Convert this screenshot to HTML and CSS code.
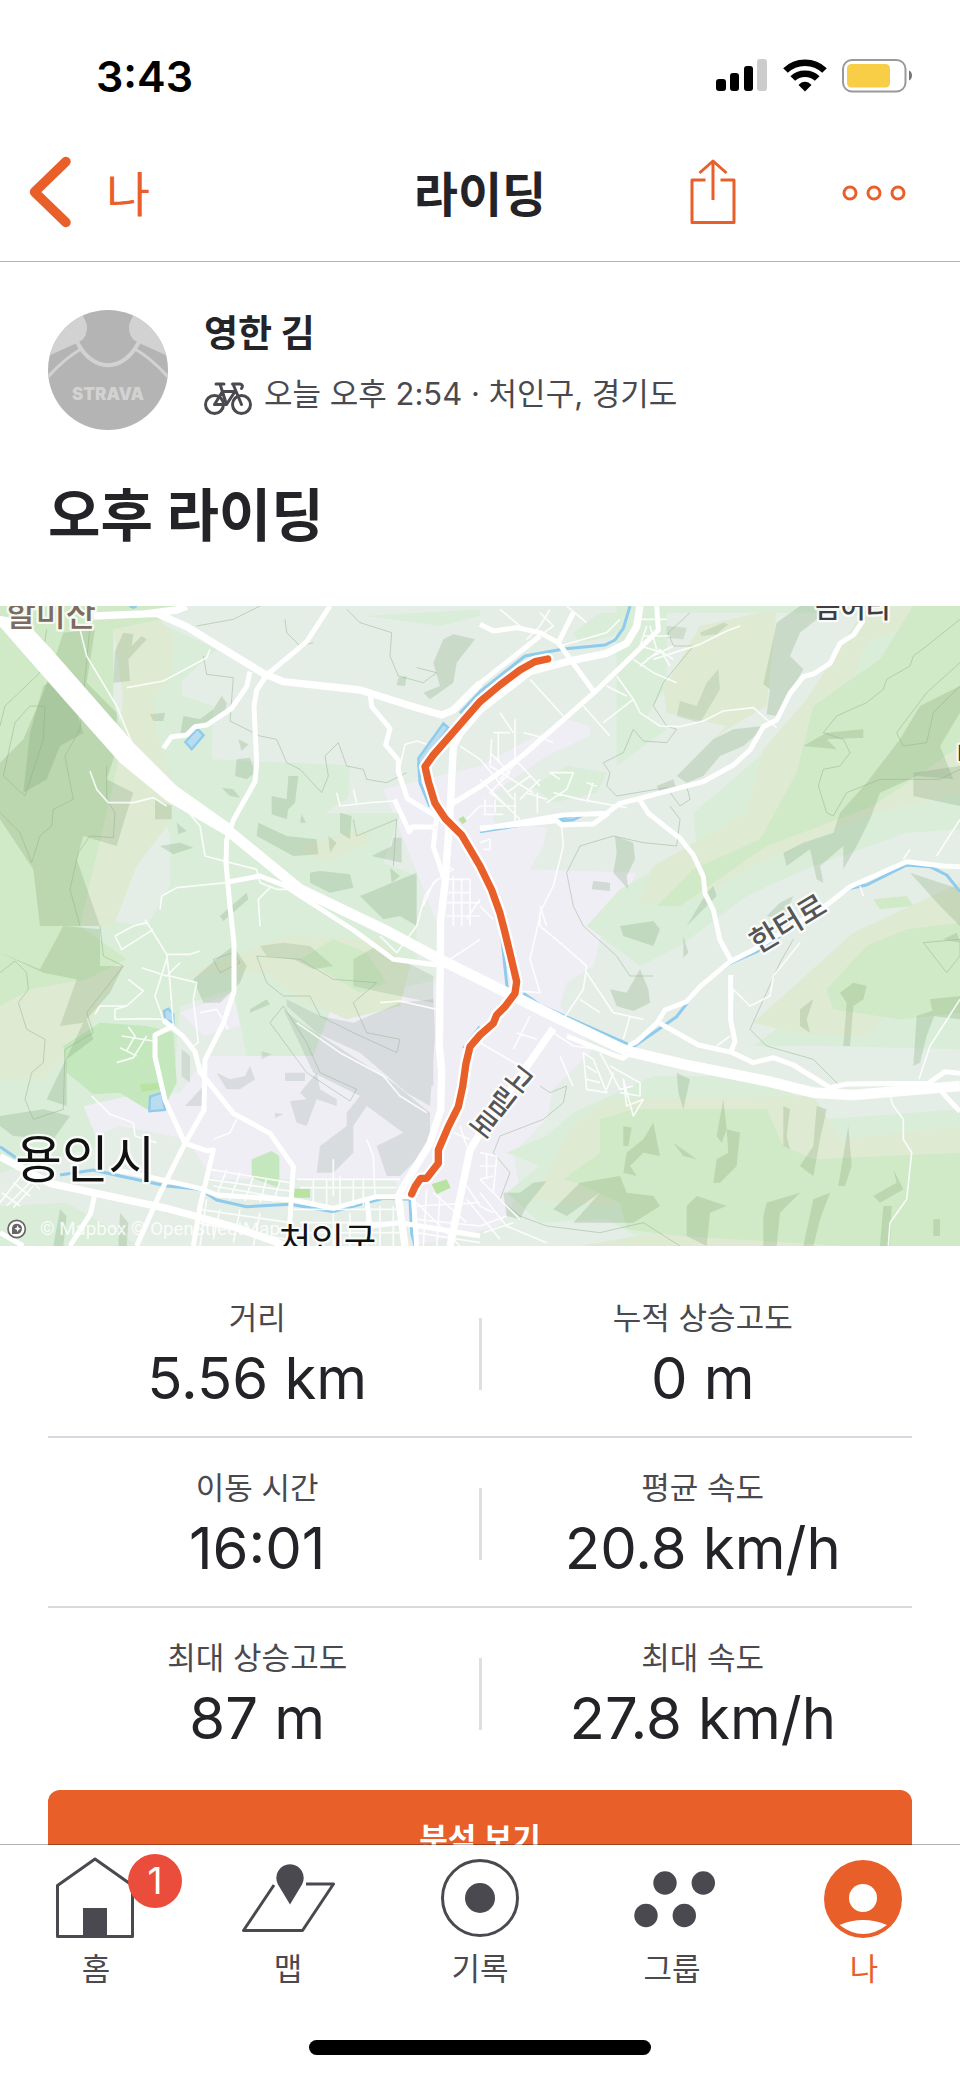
FILE: index.html
```html
<!DOCTYPE html>
<html lang="ko">
<head>
    <meta charset="UTF-8">
    <meta name="viewport" content="width=device-width, initial-scale=1.0">
    <title>라이딩</title>
    <link rel="stylesheet" href="styles.css">
</head>
<body>
    <div class="app">
        <div class="status-bar">
            <span class="time">3:43</span>
            <div class="status-icons">
                <svg width="52" height="34" viewBox="0 0 52 34">
                    <rect x="0" y="20" width="10" height="12" rx="3"/>
                    <rect x="14" y="14" width="9" height="18" rx="3"/>
                    <rect x="28" y="7" width="9" height="25" rx="3"/>
                    <rect x="41" y="0" width="10" height="32" rx="3" fill="#ccc"/>
                </svg>
                <svg width="44" height="34" viewBox="0 0 44 34">
                    <g fill="none" stroke="#000" stroke-width="6.5">
                        <path d="M2.5 11.5C13 1 31 1 41.500 11.500"/>
                        <path d="M9.800 19.500C16 13 28 13 34.200 19.500"/>
                    </g>
                    <path d="M15.500 26C19 21.500 25 21.500 28.500 26L22 32.500Z"/>
                </svg>
                <svg width="72" height="34" viewBox="0 0 72 34">
                    <rect x="1" y="1" width="62.500" height="31.500" rx="9" fill="none" stroke="#999" stroke-width="2"/>
                    <rect x="5" y="5" width="43" height="23.500" rx="4.500" fill="#f7ce46"/>
                    <path d="M67 11.500C71 13 71 20 67 21.500Z" fill="#777"/>
                </svg>
            </div>
        </div>

        <header class="nav">
            <a class="back" href="#me">
                <svg width="46" height="72" viewBox="0 0 46 72">
                    <path d="M38 5.500L6.500 36L38 66.500" fill="none" stroke="#e85f2a" stroke-width="9.500" stroke-linecap="round" stroke-linejoin="round"/>
                </svg>
                <span>나</span>
            </a>
            <h1>라이딩</h1>
            <div class="nav-actions">
                <button type="button" aria-label="공유">
                    <svg width="46" height="68" viewBox="0 0 46 68">
                        <g fill="none" stroke="#e85f2a" stroke-width="3" stroke-linejoin="round">
                            <path d="M15.500 22H2V64.500H44V22H30.500"/>
                            <path d="M23 42V3M9.500 15L23 3L36.500 15"/>
                        </g>
                    </svg>
                </button>
                <button type="button" aria-label="더 보기">
                    <svg width="64" height="68" viewBox="0 0 64 68">
                        <g fill="none" stroke="#e85f2a" stroke-width="3">
                            <circle cx="8" cy="35" r="6"/>
                            <circle cx="32" cy="35" r="6"/>
                            <circle cx="56" cy="35" r="6"/>
                        </g>
                    </svg>
                </button>
            </div>
        </header>

        <main class="content">
            <section class="profile">
                <svg class="avatar" width="120" height="120" viewBox="0 0 120 120">
                    <clipPath id="avatar-clip"><circle cx="60" cy="60" r="60"/></clipPath>
                    <g clip-path="url(#avatar-clip)">
                        <rect width="120" height="120" fill="#b4b4b4"/>
                        <path d="M32 0L38 12Q40 17 38 24Q37 29 29 33L0 46V0Z" fill="#d2d2d2"/>
                        <path d="M88 0L82 12Q80 17 82 24Q83 29 91 33L120 46V0Z" fill="#d2d2d2"/>
                        <g fill="none" stroke="#d2d2d2">
                            <path d="M29 32C45 63 75 63 91 32" stroke-width="4"/>
                            <path d="M33 39Q16 49 0 67M87 39Q104 49 120 67" stroke-width="3"/>
                        </g>
                        <text class="jersey" x="60" y="90" text-anchor="middle">STRAVA</text>
                    </g>
                </svg>
                <div class="profile-text">
                    <h2>영한 김</h2>
                    <p class="meta">
                        <svg width="48" height="48" viewBox="0 0 48 48">
                            <g fill="none" stroke="#4a494f" stroke-width="3" stroke-linecap="round" stroke-linejoin="round">
                                <circle cx="10.500" cy="34.500" r="9"/>
                                <circle cx="37.500" cy="34.500" r="9"/>
                                <path d="M12 14H20M16 14L22.500 34.500M10.500 34.500H22.500L31 21.500H18.500L10.500 34.500M28.500 14H36Q40 15 37.500 18.500M29 14L37.500 34.500"/>
                            </g>
                        </svg>
                        <span>오늘 오후 2:54 · 처인구, 경기도</span>
                    </p>
                </div>
            </section>
            <h2 class="activity-title">오후 라이딩</h2>

            <svg class="map" viewBox="0 0 2880 1920" preserveAspectRatio="xMidYMid slice" role="img" aria-label="라이딩 경로 지도">
                <rect width="2880" height="1920" fill="#e4ede6"/>

                <!-- built-up area -->
                <g fill="#efeef4">
                    <path d="M1150 550L1440 480L1700 340L1770 360V390L1640 450L1480 560L1480 650L1640 665L1630 720L1590 790L1910 800L1860 900L1800 1000L1780 1080L1700 1130L1680 1200L1780 1330L1660 1450L1640 1540L1540 1640L1560 1750L1500 1860L1240 1920L1180 1700L1300 1500L1330 1000Z"/>
                    <path d="M620 1350H900L950 1200L1320 1120V1520L1200 1720H640L560 1600L360 1560L260 1600L250 1480L540 1460Z"/>
                    <path d="M540 1220L700 1160L720 1260L610 1290Z"/>
                </g>

                <!-- low forest -->
                <g fill="#d9edd9">
                    <path d="M500 60L650 130L545 225V270L640 300L635 460L1050 478L1045 575L975 622H1200L1150 770L1250 810V1060L1000 1190L940 1350H740L700 1150L540 1200L520 1440L250 1500L300 1620L0 1700V900L440 960L510 840V680L400 500Z"/>
                    <path d="M1100 30L1440 10V30L1320 60L1250 50Z"/>
                    <path d="M1720 80L1800 20H1880L1840 90L1740 110Z"/>
                    <path d="M1850 480L2000 370L1940 330L2000 240V20H2440L2600 30L2520 200L2360 380L2200 520L2080 620L2090 720L1860 850L1760 960L1920 1080L2040 1020L2240 870L2440 780L2720 680L2880 670V980L2600 1050L2480 1160L2260 1320L2480 1320L2880 1330V1510L2480 1540L2300 1410L1960 1410L1720 1520L1640 1590L1520 1640L1620 1680L1520 1760L1620 1850L1820 1840L1960 1920H2880V0H1850Z"/>
                    <path d="M1600 540L1700 480L1820 500L1790 560L1660 590Z"/>
                    <path d="M1870 890L2020 900L2000 1030L1900 1020Z"/>
                    <path d="M0 1800L200 1790L420 1920H0Z"/>
                </g>

                <!-- tan slopes -->
                <g fill="#dfead2">
                    <path d="M340 60L480 40L520 90L510 230L460 270L470 390L530 560L500 660L410 780L340 960L240 960L270 830L330 580L370 280Z"/>
                    <path d="M900 720L1080 670L1120 700L1000 760H940Z"/>
                    <path d="M0 1130L260 1080L370 1080L280 1230L270 1280L130 1420H0Z"/>
                    <path d="M520 1120L860 990L1130 1000L1230 1080L1200 1200L1040 1240L900 1180L800 1100L620 1100Z"/>
                    <path d="M2100 60L2330 10L2300 300L2180 370L2120 420L2180 360L2000 320L1990 250Z"/>
                    <path d="M2600 110L2880 0H2600L2420 280L2290 430L2240 620L1960 780L1910 900L2080 880L2300 760L2620 620L2880 560V420L2600 500L2480 420Z"/>
                    <path d="M2260 1250L2560 980L2880 830V1000L2600 1290L2380 1280Z"/>
                    <path d="M1710 1570L1820 1480L2440 1470L2520 1600L2880 1560V1700L2400 1720L1820 1800L1600 1780Z"/>
                    <path d="M1740 1920L1960 1880L2700 1890L2880 1920Z"/>
                </g>

                <!-- forest -->
                <g fill="#d0e9c6">
                    <path d="M0 0H560L480 40L340 70V280L370 390L330 580L270 830L240 960L380 1060L260 1120L90 1150L0 1200Z"/>
                    <path d="M2440 300L2640 160L2740 0H2880V420L2620 600L2300 720L2040 900L1970 900L2080 790L2280 700L2390 500Z"/>
                    <path d="M2480 1150L2600 1020L2720 970L2880 950V1220L2700 1240L2500 1210Z"/>
                    <path d="M1690 1720L1800 1640V1540L1900 1510H2300L2350 1620L2440 1660L2880 1640V1920H2540L2040 1890L1880 1870L1860 1790L1730 1730Z"/>
                    <path d="M900 1060L1000 1000L1100 1040L1160 1130L1080 1160L960 1090Z"/>
                    <path d="M2620 880L2720 870L2740 900L2640 910Z"/>
                </g>
                <g fill="#c4e7bd">
                    <path d="M190 1320L300 1250L440 1260L520 1280L530 1430L490 1510H440L360 1460L280 1465L200 1400Z"/>
                    <path d="M755 1660L815 1635L838 1650V1745L755 1715Z"/>
                    <path d="M1295 1735L1340 1720L1352 1745L1310 1765Z" fill="#b9e3a2"/>
                    <path d="M880 1748H930V1775H880ZM420 1435L480 1430V1450L425 1458ZM1375 640L1390 630L1400 645L1388 655Z" fill="#b9e3a2"/>
                </g>

                <!-- ridge shading -->
                <g fill="#6f9466" fill-opacity=".22">
                    <path d="M190 80L285 70L260 230L350 320V430L320 520L400 560L380 620L350 720L250 690L230 760L300 960H120L100 790L0 640V470L70 400L130 260Z"/>
                    <path d="M130 240L190 200L250 380L180 420L140 520L70 560L90 380Z"/>
                    <path d="M0 1040L120 1090L190 960L300 970L300 1080L370 1080L330 1160L260 1240L280 1300L200 1360V1500L140 1480L250 1250L180 1260L230 1120L130 1100Z"/>
                    <path d="M0 1530L130 1510L210 1530L160 1600L40 1590L0 1560Z"/>
                    <path d="M370 80L400 85L395 120L425 90L440 100L385 160L390 225L340 230L345 135Z"/>
                    <path d="M550 330L600 340L640 310L665 270L680 290L675 325L620 350L540 390Z"/>
                    <path d="M710 460L750 455L765 500L740 520L705 510ZM715 400L745 415L725 435ZM665 545L700 550L720 575L690 570ZM450 325L495 320L490 345L460 345Z"/>
                    <path d="M865 510H895L885 590L865 610L860 640L815 625V570L860 580ZM905 625L918 650H900Z"/>
                    <path d="M775 650L860 690L950 700L955 745L880 750L770 690ZM1020 620L1055 630L1050 700L1020 680ZM985 690L1010 710L990 740Z"/>
                    <path d="M930 800L960 795L1050 805L1060 845L990 860L930 830ZM1115 750L1175 720L1180 695L1205 695V770ZM1170 785L1200 810L1175 830Z"/>
                    <path d="M1080 870L1250 800V960L1200 930L1150 940ZM660 930L740 860L745 880L670 945ZM480 720L540 710L580 725L520 745ZM530 650L560 675L535 685ZM465 580L515 600V640H465Z"/>
                    <path d="M1330 100L1360 85L1425 100L1370 170L1360 230L1290 280L1270 260L1320 240L1300 170ZM1195 215L1220 210L1215 240L1190 238Z"/>
                    <path d="M580 1120L660 1050L700 1020L740 1080L720 1130L660 1190H610ZM750 1210L800 1180L810 1195L750 1220Z"/>
                    <path d="M780 1020L850 1010L930 1020L1000 1080L940 1090L880 1060L800 1050ZM1060 1060L1130 1020L1200 1060L1300 1110V1190L1150 1160L1060 1140Z" fill-opacity=".18"/>
                    <path d="M1060 1250L1200 1190L1300 1180L1305 1290L1290 1500L1220 1460L1080 1340L950 1280L860 1200V1180L960 1230ZM1240 1310L1300 1270V1440L1220 1420Z" fill="#6f8078" fill-opacity=".17"/>
                    <path d="M850 1210L900 1250L980 1300L1180 1430L1290 1520V1620L1200 1710H1160L1130 1620L1210 1580L1100 1500L1060 1560V1640L1000 1700L950 1700L960 1620L1040 1560V1520L1080 1470L940 1400Z" fill="#6f8078" fill-opacity=".17"/>
                    <path d="M870 1485L920 1480L900 1460L950 1400L960 1450L1010 1480V1500L950 1480L920 1560L890 1550ZM650 1400L690 1420L735 1410L750 1380L765 1420L720 1450H680ZM855 1400H915V1425H855ZM785 1335L815 1345L785 1360ZM825 1520L850 1525L825 1535ZM545 1330L570 1350V1430L545 1410ZM610 1440L605 1500L555 1500Z" fill="#6f8078" fill-opacity=".17"/>
                    <path d="M2330 50L2400 0H2500L2400 80L2370 150L2410 190L2330 330L2300 325L2310 250L2290 235Z"/>
                    <path d="M2120 230L2155 190L2160 250L2100 350L2030 330L2040 285L2090 300ZM2100 80L2170 50L2185 55L2150 85L2105 90ZM2000 60L2060 65L2050 100L2000 95Z" fill-opacity=".18"/>
                    <path d="M2030 510L2140 400L2200 370L2290 360L2310 350L2230 420L2160 450L2110 510L2060 530ZM1970 540L2020 520L2030 550L1980 560Z"/>
                    <path d="M2410 420L2480 380L2590 370V395L2480 400L2510 430Z"/>
                    <path d="M2520 620L2600 530L2700 400L2760 300L2880 240V320L2820 420L2860 520L2750 510L2640 560L2610 640L2570 720L2530 790V720L2460 780L2470 830L2450 820L2430 730L2360 780L2350 740L2410 710L2500 680Z"/>
                    <path d="M2740 500L2880 480V600L2740 570ZM1845 690L1900 710L1905 760L1880 810L1885 850L1840 800L1850 740ZM1780 825L1830 830L1830 855L1775 850ZM2730 800L2880 850V960L2820 900Z"/>
                    <path d="M1860 960L1960 945L1980 970L1960 1020L1870 990ZM2050 990L2065 1040L2050 1055ZM1920 1090L1945 1150L1950 1190L1900 1215L1850 1200L1830 1150L1880 1160Z"/>
                    <path d="M2520 1160L2560 1130L2600 1140L2590 1180L2560 1200L2550 1320H2530L2540 1190ZM2400 1210L2440 1180L2420 1240L2430 1280L2400 1260ZM2750 1230L2810 1210L2780 1290L2760 1370L2740 1380ZM2790 1180L2880 1170V1240L2800 1230Z"/>
                    <path d="M2170 1480L2180 1570L2165 1610L2150 1590ZM2180 1570L2220 1580L2210 1680L2160 1730H2140L2150 1660L2185 1640ZM1930 1600L1960 1550L1980 1650L1930 1640L1890 1680L1910 1710L1870 1700L1880 1640ZM2350 1500L2370 1510L2360 1590L2370 1630L2350 1620ZM2450 1500L2480 1510L2460 1600L2440 1710L2400 1680L2440 1620ZM2545 1560L2555 1680L2535 1740L2515 1740ZM2020 1610L2090 1660L2050 1650ZM1870 1560L1895 1565L1885 1620L1870 1620ZM2620 1770L2690 1730L2680 1690L2710 1750L2640 1790Z"/>
                    <path d="M2090 1770L2180 1800L2130 1820L2120 1920L2060 1890L2060 1800ZM2300 1790L2400 1760L2340 1820L2330 1920H2290V1830ZM2440 1780L2490 1760L2460 1840L2440 1920H2410ZM2650 1800H2675L2670 1920H2640ZM2800 1840H2820V1890H2800Z"/>
                    <path d="M1510 1760L1560 1760L1600 1730L1640 1725L1580 1800L1560 1840L1520 1830ZM1660 1810L1740 1730L1860 1710L1880 1760L1960 1770L1980 1800L1900 1850H1720L1800 1760L1700 1830ZM2030 1400L2070 1420L2050 1510L2035 1460Z"/>
                    <path d="M180 1810L200 1830L190 1920H160ZM360 1820L385 1850L380 1920H355Z"/>
                    <path d="M2300 930L2340 890L2380 870L2350 940ZM2060 960L2120 860L2140 840L2150 870ZM2880 1010L2830 1000L2870 980Z"/>
                </g>

                <!-- contour lines -->
                <g fill="none" stroke="#8fae8a" stroke-opacity=".45" stroke-width="3" stroke-linejoin="round">
                    <path d="M0 360L15 300L120 200L140 70M10 510L45 350L90 300L135 300L130 400L75 570Z"/>
                    <path d="M270 60L240 370L195 450L220 580L160 610L155 660L120 690L95 770L60 680L0 620M240 960L210 850L235 740L270 690L340 695L345 620L320 580V480"/>
                    <path d="M590 60L700 40L780 0M855 40L860 80L900 120L940 110M610 150L620 205L700 215L690 345L780 390L830 400L860 470L900 490L965 560L985 510L975 450L1015 410L1040 480L1090 490L1100 520L1160 530L1220 500"/>
                    <path d="M1040 10L1080 50L1175 80L1170 150L1195 210L1270 230L1310 200L1250 185M1060 640L1070 690L1190 640L1180 780"/>
                    <path d="M0 1100L45 1065L80 1100L85 1150L55 1190L80 1270L135 1300L130 1370L95 1400L75 1480L100 1540L190 1510L195 1330L280 1280L260 1220L370 1080L310 1050L300 960"/>
                    <path d="M640 1060L700 1040L720 1070L660 1100ZM770 1050L900 1060L1000 1120L1130 1130L1060 1190L1100 1280L1200 1300L1190 1340L1060 1280L960 1230L930 1170L850 1170L800 1130ZM850 1200L810 1250L920 1400L1050 1485L1070 1450L960 1400L920 1310Z"/>
                    <path d="M2070 20L2005 80L2020 120L2080 120L1990 230L1960 300L2000 360L2030 370L2000 410L1930 405L1900 370L1870 440L1810 470L1830 500L1820 540L1850 570L2000 545L2040 600L2070 580L2060 540M2010 600L2040 640L2030 720L1930 710L1840 690L1740 720L1700 800L1720 900L1750 960L1850 1050L1890 1110L1960 1110"/>
                    <path d="M2880 40L2780 120L2740 150L2730 180L2660 220L2650 250L2600 290L2510 330L2470 380L2530 400L2550 440L2520 480L2470 490L2455 540L2480 620L2500 630L2540 560L2640 520L2820 520L2880 490M2880 170L2780 260L2690 380L2710 420L2780 410L2800 320L2880 240"/>
                    <path d="M2380 1000L2340 1070L2250 1270L2300 1320L2440 1360L2520 1440M2770 1010L2880 1000V1050L2840 1100ZM1620 1440L1650 1460L1700 1440L1690 1490L1630 1540L1500 1590L1480 1640L1530 1700L1500 1780L1560 1830L1640 1860L1800 1880L1930 1850L2040 1920"/>
                </g>

                <!-- water -->
                <g fill="#b9dcee" stroke="#8ecbec" stroke-width="7">
                    <path d="M592 368L611 388L575 430L556 408ZM450 1472L485 1460L495 1512L448 1516ZM492 1215L505 1208L520 1225V1250L495 1240ZM1330 352L1255 457L1258 490L1345 365ZM1670 640L1760 622L1720 642L1680 645Z"/>
                    <path d="M388 0L400 5L410 0" fill="none"/>
                </g>
                <g fill="none" stroke="#8ecbec" stroke-width="9" stroke-linejoin="round">
                    <path d="M1890 0L1870 67L1845 102L1815 117L1690 129L1575 150L1440 257L1380 322M1256 470L1260 530L1290 602M1505 992L1522 1150M1570 1162L1620 1197L1900 1322L2030 1232L2100 1142L2190 1072L2270 1037L2480 897L2550 847L2600 837L2720 777L2790 782L2840 807L2880 857"/>
                    <path d="M1440 1262L1390 1327M0 1622L50 1657M180 1707L280 1692L360 1710L500 1740L600 1750L650 1782L740 1802L870 1795L1000 1817L1150 1777L1230 1780L1235 1882L1245 1920M1440 677L1680 640"/>
                </g>

                <!-- small streets -->
                <g fill="none" stroke="#fff" stroke-opacity=".85" stroke-width="5" stroke-linejoin="round">
                    <path d="M240 70L260 150L350 300L400 420L540 590L600 660L615 750L690 770L770 790L780 830L830 850L870 850M270 495L290 550L325 590H400L460 575L500 600M380 245L490 225L620 155L630 130M480 910L485 870L530 845L680 830M1010 560L1020 600L1110 590L1180 585M1060 550L1070 590M1200 480L1215 415L1250 405L1280 415M780 960L775 880L810 845M1440 460L1380 420M1440 600L1400 640"/>
                    <path d="M435 940L500 1045L510 1130L520 1260M345 990L400 960L440 950M345 990L365 1030L460 970M500 1045L570 1045L600 1035M500 1060L465 1170L490 1240M385 1120L430 1155L380 1200L345 1210V1240L430 1238L490 1240M285 1225L300 1200H380M425 1085L500 1110L540 1070M510 1110L590 1130L580 1180L595 1310L580 1320M600 1220L650 1210L685 1270M365 1290L460 1305M350 1370L400 1355L440 1290M360 1325L410 1350M385 1262L405 1290L380 1335M275 1470L330 1525L400 1550L405 1590L470 1610M640 1600L690 1580L710 1540M890 1250L1020 1340L1150 1410L1200 1470L1280 1520M1100 1600L1120 1650L1125 1770M1000 1660V1770M1140 1190L1200 1185L1310 1210"/>
                    <path d="M630 1690L870 1730M625 1720L870 1755M640 1740L870 1780M680 1690L650 1770M720 1700L690 1780M760 1710L735 1785M800 1715L780 1790M840 1725L820 1790M600 1810L870 1850M620 1780L600 1920M590 1850L860 1900M660 1810L640 1900M720 1810L700 1910M780 1820L760 1920M890 1720H1200M900 1745H1190M940 1720V1800M980 1720V1810M1020 1710V1810M1060 1720V1800M1090 1720V1800M900 1850H1200M900 1880H1200M1000 1820V1920M1050 1820V1920M1100 1830V1920M1140 1800V1920M1180 1800V1920M880 1810H1190"/>
                    <path d="M0 1790L70 1700L120 1750M20 1800L90 1730M40 1805L100 1740M5 1760L60 1800M40 1730L90 1770"/>
                    <path d="M1250 1800L1440 1790M1250 1840L1440 1860M1250 1880L1440 1910M1280 1750L1270 1920M1320 1770L1310 1920M1300 1760L1400 1850M1250 1790L1380 1920M1400 1740L1440 1800L1480 1820M1400 1780L1500 1900M1440 1720L1560 1840M1440 1760L1520 1860L1640 1910M1440 1640L1490 1650L1480 1760M1440 1680H1490M1440 1720L1480 1710M1460 1640V1720M1440 1860L1520 1830M1450 1880L1540 1850M1380 1560L1400 1620M1360 1580L1410 1600"/>
                    <path d="M1340 820H1410V960M1345 860H1410M1340 890H1440M1340 930H1440M1360 810V960M1385 820V960M1270 900L1300 830L1360 790L1340 780M1250 960L1275 870L1310 820M1440 880L1400 940M1320 1080L1440 1000M1140 990L1190 1040L1250 960"/>
                    <path d="M1480 380H1530M1475 400L1470 480L1600 560M1495 380V470M1545 340V460L1620 540M1440 460L1540 580M1440 520L1560 640M1470 440L1530 500L1470 560L1520 600M1500 520L1560 460M1520 560L1590 510M1560 580L1620 520M1440 600H1550M1450 625H1510M1455 580V620M1485 580V620M1545 560V650M1580 560L1640 580M1612 560V620M1570 380L1610 390L1660 410M1500 320L1540 380M1640 590L1700 550L1720 500L1650 500L1680 520M1660 560L1740 580L1880 605M1780 530L1760 590M1790 540L1760 530"/>
                    <path d="M1590 220L1690 330M1750 300L1830 390M1850 210L1900 280L1810 350M1820 240L1880 270M1900 280L1920 320L1980 360L2040 362L2110 345L2170 315L2260 305L2300 340L2330 365M1960 160L2100 115L2180 75L2220 60M1940 60L1920 120L1990 140L2020 160M1930 90H2010M1950 60L1970 130M1920 40H2000M1900 160L1960 200L2030 230M1920 180L1980 130L2010 180M1940 160L2020 120M1650 10L1620 60L1580 100M1560 60L1500 10M1620 20L1660 60L1590 110M1700 0L1760 50M1680 120L1820 80L1860 40"/>
                    <path d="M1685 660L1690 720L1660 840L1620 920L1620 960L1680 1010L1760 1080L1750 1150L1690 1240M1760 1100L1840 1220L1930 1240M1740 1180L1800 1220M1640 960L1620 900M1590 1230L1540 1330M1550 1280L1610 1300M1440 1310L1560 1380M1470 1150L1620 1160L1590 1060L1620 930M1440 710L1470 700V730L1450 730M1440 900L1480 940M1890 1230L1870 1300"/>
                    <path d="M1750 1340L1760 1450L1820 1460L1780 1360ZM1800 1340L1860 1450L1900 1440M1830 1380L1920 1430V1470L1860 1460M1870 1420L1880 1500L1930 1480L1900 1530ZM1760 1380L1790 1400M1760 1420L1800 1430M1660 1280L1720 1320L1800 1330M1680 1350L1710 1420L1720 1440M1840 1400L1820 1450"/>
                    <path d="M2400 1010L2320 1110L2310 1170L2250 1200L2200 1150L2190 1260M2660 1440L2680 1500L2710 1540V1600L2735 1640L2720 1780L2670 1850L2665 1920M2757 1420L2790 1320L2880 1180M2810 750L2880 640M2580 840L2590 870M2710 760L2730 730M2150 1320L2190 1290"/>
                </g>

                <!-- roads -->
                <g fill="none" stroke="#fff" stroke-width="15" stroke-linejoin="round">
                    <path d="M990 0L920 107L800 207L770 252L762 302L770 472L765 527L700 642L680 702L678 772L690 902L702 1012V1157L670 1252L615 1362L612 1512L555 1612L480 1762L410 1920"/>
                    <path d="M750 197L740 242L695 307L620 357L585 362L560 387L515 392L490 427"/>
                    <path d="M1110 262L1115 302L1170 367L1157 417L1195 462V497L1222 577L1310 632L1300 722L1330 812M1183 580L1228 677L1237 662L1305 664"/>
                    <path d="M1970 0L1975 72L1910 137L1780 262L1570 447L1440 542L1350 597M1440 55L1480 75L1550 65L1620 80L1675 110L1780 255M1675 110L1720 20M1430 240L1620 90"/>
                    <path d="M1440 670L1690 627L1820 622L1860 592L1920 577L2110 527L2200 477L2250 432L2290 362L2330 342L2370 262L2410 212L2440 204L2490 172L2520 112L2560 87L2590 42M1440 667L1670 644L1685 657L1780 654L1825 622"/>
                    <path d="M1920 582L1945 622L2040 697L2080 747L2110 812L2115 862L2140 912L2160 1002L2192 1062"/>
                    <path d="M2880 782L2830 780L2720 767L2550 842L2480 897L2260 1032L2190 1067L2100 1142L2060 1187L1995 1212L1970 1252L1910 1307L1890 1317V1342L1870 1357L1840 1347L1700 1290"/>
                    <path d="M1980 1252L2095 1317L2195 1339L2260 1370L2320 1355L2380 1377L2490 1445L2540 1434L2785 1432L2835 1397L2880 1402M2192 1107V1242L2205 1307L2192 1339M2820 1452L2880 1517"/>
                    <path d="M285 1762L272 1822L210 1920M515 1262L465 1287V1352L495 1482L555 1612L620 1634L640 1632L600 1802L580 1920M490 1242L550 1292L585 1337L600 1397L700 1522L810 1582L880 1682L865 1920"/>
                    <path d="M690 827L780 810L850 837L1060 972L1180 1060L1310 1077M330 1690L400 1702L600 1747L650 1767L880 1782L1000 1807L1130 1772L1230 1772M1240 1772L1250 1920M1100 1780L1110 1860L1200 1850L1440 1890M0 1880L70 1920"/>
                </g>
                <g fill="none" stroke="#fff" stroke-width="22" stroke-linejoin="round">
                    <path d="M280 30L470 22L560 62L790 202L850 227L1080 252L1240 302L1325 327L1360 312L1440 232M420 25L530 12L560 0"/>
                    <path d="M1920 0L1910 62L1880 112L1820 142L1700 167L1590 197L1440 312L1380 382L1360 422L1350 622L1335 832L1322 942L1318 1322L1325 1392L1322 1512L1290 1612L1210 1742L1195 1772L1215 1920"/>
                    <path d="M1660 1267L1440 1582L1410 1632L1350 1920M0 1652L150 1732L500 1807L700 1862L860 1920"/>
                </g>
                <path d="M680 670L900 850L1150 970L1310 1055L1440 1120L1560 1180L1680 1240L1880 1335L2060 1377L2300 1425L2440 1460L2560 1467L2880 1440" fill="none" stroke="#fff" stroke-width="32" stroke-linejoin="round"/>
                <path d="M0 30L70 40L150 125L400 410L530 540L700 660L680 690L500 585L360 470L200 290L0 62Z" fill="#fff"/>

                <!-- recorded route, white casing under the orange line -->
                <g fill="none" stroke-linecap="round" stroke-linejoin="round">
                    <path stroke="#fff" stroke-width="36" d="M1643 159L1605 167L1560 192L1500 237L1440 287L1370 367L1300 447L1275 482L1285 527L1305 592L1335 637L1385 687L1440 780L1475 852L1500 922L1513 972L1530 1042L1550 1127L1545 1162L1515 1202L1490 1227L1480 1252L1440 1287L1410 1322L1398 1372L1388 1442L1375 1502L1345 1562L1315 1632V1672L1280 1717H1262L1245 1742L1235 1764"/>
                    <path stroke="#e85f2a" stroke-width="22" d="M1643 159L1605 167L1560 192L1500 237L1440 287L1370 367L1300 447L1275 482L1285 527L1305 592L1335 637L1385 687L1440 780L1475 852L1500 922L1513 972L1530 1042L1550 1127L1545 1162L1515 1202L1490 1227L1480 1252L1440 1287L1410 1322L1398 1372L1388 1442L1375 1502L1345 1562L1315 1632V1672L1280 1717H1262L1245 1742L1235 1764"/>
                </g>

                <g class="map-labels">
                    <text x="17" y="61" font-size="98" fill="#7d6a60">할미산</text>
                    <text x="2446" y="36" font-size="82" fill="#3d3d42">금어리</text>
                    <text x="2870" y="478" font-size="81" fill="#3d3d42">마</text>
                    <text class="city" x="46" y="1715" font-size="152" fill="#111">용인시</text>
                    <text class="city" x="836" y="1940" font-size="106" fill="#111">처인구</text>
                    <text transform="translate(2366 956) rotate(-31)" y="28" font-size="90" fill="#555" text-anchor="middle">한터로</text>
                    <text transform="translate(1504 1488) rotate(38)" font-size="86" fill="#555" text-anchor="middle"><tspan x="0" y="-56">고</tspan><tspan x="0" y="30">림</tspan><tspan x="0" y="116">로</tspan></text>
                </g>
                <circle cx="50" cy="1869" r="26" fill="#fff" stroke="#666" stroke-width="5"/>
                <path d="M36 1884V1866Q38 1853 51 1853Q66 1855 66 1868Q64 1884 50 1884Z" fill="#666"/>
                <path d="M53 1858L56 1865L63 1868L56 1871L53 1878L50 1871L43 1868L50 1865Z" fill="#fff"/>
                <text class="attribution" x="120" y="1886">© Mapbox © OpenStreetMap</text>
            </svg>

            <section class="stats">
                <div class="stat-row">
                    <div class="stat"><span class="label">거리</span><span class="value">5.56 km</span></div>
                    <div class="divider"></div>
                    <div class="stat"><span class="label">누적 상승고도</span><span class="value">0 m</span></div>
                </div>
                <div class="stat-row">
                    <div class="stat"><span class="label">이동 시간</span><span class="value">16:01</span></div>
                    <div class="divider"></div>
                    <div class="stat"><span class="label">평균 속도</span><span class="value">20.8 km/h</span></div>
                </div>
                <div class="stat-row">
                    <div class="stat"><span class="label">최대 상승고도</span><span class="value">87 m</span></div>
                    <div class="divider"></div>
                    <div class="stat"><span class="label">최대 속도</span><span class="value">27.8 km/h</span></div>
                </div>
                <button type="button" class="analysis">분석 보기</button>
            </section>
        </main>

        <nav class="tab-bar">
            <div class="tabs">
                <a href="#home">
                    <span class="tab-icon">
                        <svg width="100" height="84" viewBox="0 0 100 84">
                            <path d="M11.500 28.500L49 2L86.500 28.500V79.500H11.500Z" fill="none" stroke="#4a494f" stroke-width="3" stroke-linejoin="round"/>
                            <rect x="37" y="51" width="24" height="28" fill="#4a494f"/>
                        </svg>
                        <span class="badge">1</span>
                    </span>
                    홈
                </a>
                <a href="#maps">
                    <span class="tab-icon">
                        <svg width="100" height="84" viewBox="0 0 100 84">
                            <path d="M36 28L5.500 73.500H64.500L95.500 27H68" fill="none" stroke="#4a494f" stroke-width="3" stroke-linejoin="round"/>
                            <path d="M52 47.500L40 27.500A13.700 13.700 0 1 1 64 27.500Z" fill="#4a494f"/>
                        </svg>
                    </span>
                    맵
                </a>
                <a href="#record">
                    <span class="tab-icon">
                        <svg width="100" height="84" viewBox="0 0 100 84">
                            <circle cx="50" cy="41" r="37.500" fill="none" stroke="#4a494f" stroke-width="3"/>
                            <circle cx="50" cy="41" r="15" fill="#4a494f"/>
                        </svg>
                    </span>
                    기록
                </a>
                <a href="#groups">
                    <span class="tab-icon">
                        <svg width="100" height="84" viewBox="0 0 100 84" fill="#4a494f">
                            <circle cx="43" cy="26" r="11.700"/>
                            <circle cx="81.300" cy="26" r="11.700"/>
                            <circle cx="24" cy="58.500" r="11.700"/>
                            <circle cx="62.300" cy="58.500" r="11.700"/>
                        </svg>
                    </span>
                    그룹
                </a>
                <a href="#me" class="active">
                    <span class="tab-icon">
                        <svg width="100" height="84" viewBox="0 0 100 84">
                            <circle cx="49" cy="42" r="39" fill="#e85f2a"/>
                            <circle cx="49" cy="41" r="14" fill="#fff"/>
                            <path d="M25.500 68Q49 58 73 68Q49 86 25.500 68Z" fill="#fff"/>
                        </svg>
                    </span>
                    나
                </a>
            </div>
            <div class="home-indicator"></div>
        </nav>
    </div>
</body>
</html>
```
FILE: styles.css
```css
* {
    box-sizing: border-box;
}
body {
    margin: 0;
    background-color: white;
    color: #242428;
    font-family: Inter, "Noto Sans CJK KR", sans-serif;
}
h1, h2, p {
    margin: 0;
}
svg {
    display: block;
    flex-shrink: 0;
}
a {
    color: inherit;
    text-decoration: none;
}
button {
    border: none;
    padding: 0;
    background: none;
    font-family: inherit;
    cursor: pointer;
}
.app {
    display: flex;
    flex-direction: column;
    height: 100vh;
}

.status-bar {
    display: flex;
    justify-content: space-between;
    align-items: center;
    height: 128px;
    padding: 24px 46px 0 96px;
    color: black;
}
.time {
    font-size: 43px;
    font-weight: 600;
}
.status-icons {
    display: flex;
    gap: 15px;
}

.nav {
    display: grid;
    grid-template-columns: 1fr auto 1fr;
    align-items: center;
    height: 134px;
    padding: 0 54px 0 28px;
    border-bottom: 1px solid #b2b2b2;
}
.nav svg {
    margin-bottom: 6px;
}
.back {
    display: flex;
    align-items: center;
    gap: 32px;
    color: #e85f2a;
    font-size: 48px;
    line-height: 72px;
}
.nav h1 {
    padding-left: 26px;
    font-size: 48px;
    font-weight: 600;
    line-height: 72px;
}
.nav-actions {
    display: flex;
    justify-content: flex-end;
    gap: 106px;
}

.content {
    flex: 1;
    min-height: 0;
    overflow-y: auto;
    scrollbar-width: none;
}
.profile {
    display: flex;
    gap: 36px;
    padding: 48px 48px 0;
}
.jersey {
    fill: #d2d2d2;
    font-size: 17px;
    font-weight: 900;
}
.profile-text {
    display: flex;
    flex-direction: column;
    gap: 12px;
}
.profile h2 {
    font-size: 37px;
    font-weight: 700;
    line-height: 48px;
}
.meta {
    display: flex;
    align-items: center;
    gap: 12px;
    color: #4a494f;
    font-size: 31px;
    line-height: 48px;
}
.activity-title {
    padding: 50px 48px 54px;
    font-size: 57px;
    font-weight: 700;
    line-height: 72px;
}

.map {
    width: 100%;
    height: auto;
}
.map-labels text {
    font-family: "Noto Sans CJK KR", sans-serif;
    font-weight: 500;
    stroke: white;
    stroke-width: 14px;
    stroke-opacity: 0.8;
    stroke-linejoin: round;
    paint-order: stroke;
}
.map-labels .city {
    font-weight: 400;
}
.attribution {
    fill: white;
    fill-opacity: 0.85;
    font-family: Roboto, sans-serif;
    font-size: 56px;
}

.stats {
    padding: 22px 48px 48px;
}
.stat-row {
    display: grid;
    grid-template-columns: 1fr 3px 1fr;
    gap: 12px;
    align-items: center;
    padding: 30px 0 26px;
    border-bottom: 2px solid #d8d8de;
}
.stat-row:nth-child(3) {
    border-bottom: none;
}
.stat {
    display: flex;
    flex-direction: column;
    gap: 8px;
    text-align: center;
}
.divider {
    height: 72px;
    background-color: #dfdfe1;
}
.label {
    color: #4a494f;
    font-size: 31px;
    line-height: 40px;
}
.value {
    font-size: 58px;
    line-height: 64px;
}
.analysis {
    width: 100%;
    height: 92px;
    margin-top: 14px;
    border-radius: 12px;
    background-color: #e85f2a;
    color: white;
    font-size: 31px;
    font-weight: 700;
}

.tab-bar {
    position: relative;
    margin-top: -1px;
    border-top: 1px solid rgba(0, 0, 0, 0.3);
    background-color: white;
    background-clip: padding-box;
    padding: 12px 0 24px;
}
.tabs {
    display: grid;
    grid-template-columns: repeat(5, 1fr);
}
.tabs a {
    display: flex;
    flex-direction: column;
    align-items: center;
    gap: 8px;
    color: #4a494f;
    font-size: 31px;
    line-height: 40px;
}
.tabs .active {
    color: #e85f2a;
}
.tab-icon {
    position: relative;
}
.badge {
    position: absolute;
    top: -3px;
    left: 82px;
    width: 54px;
    height: 54px;
    border-radius: 50%;
    background-color: #eb4d3d;
    color: white;
    font-size: 37px;
    line-height: 54px;
    text-align: center;
}
.home-indicator {
    width: 342px;
    height: 15px;
    margin: 51px auto 0;
    border-radius: 8px;
    background-color: black;
}
```
